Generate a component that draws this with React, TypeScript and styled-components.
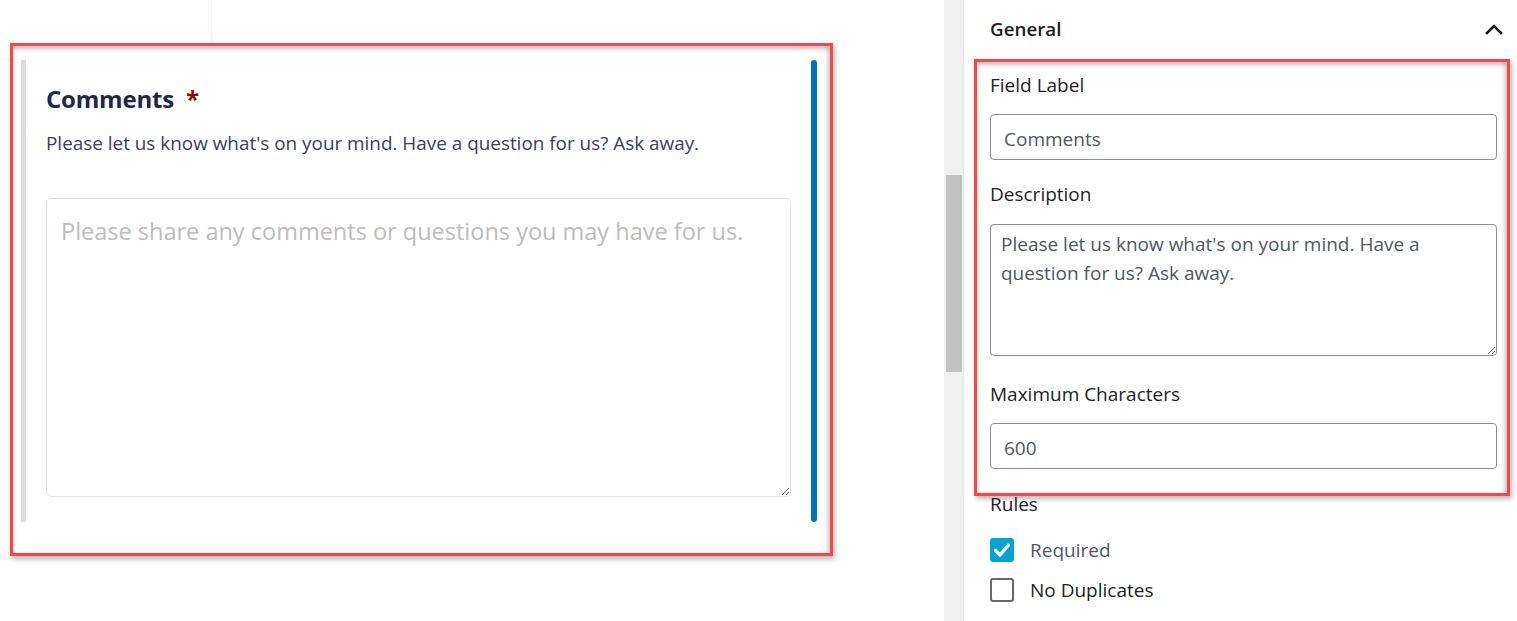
import React from "react";
import styled, { createGlobalStyle } from "styled-components";

const Global = createGlobalStyle`
  html, body { margin: 0; padding: 0; background: #fff; }
  body { font-family: "Open Sans", "Noto Sans", sans-serif; overflow: hidden; }
  * { box-sizing: border-box; }
`;

const Page = styled.div`
  display: flex;
  width: 1517px;
  height: 621px;
  overflow: hidden;
`;

const Canvas = styled.div`
  position: relative;
  width: 944px;
  flex: none;
  padding: 43px 0 0 10px;
`;

const Ghost = styled.div`
  position: absolute;
  left: 0;
  top: 0;
  width: 212px;
  height: 60px;
  border-right: 1px solid #f4f4f4;
  border-bottom: 1px solid #f6f6f6;
`;

const Highlight = styled.div`
  position: relative;
  border: 3px solid #f44848;
  box-shadow: 2px 3px 5px rgba(0, 0, 0, 0.28), inset 0 3px 5px rgba(0, 0, 0, 0.22),
    inset -3px 0 4px rgba(0, 0, 0, 0.12);
`;

const CardFrame = styled(Highlight)`
  width: 823px;
  height: 513px;
  padding: 14px 13px 31px 8px;
  background: #fff;
`;

const FieldBlock = styled.div`
  display: flex;
  height: 100%;
  border-left: 5px solid #dcdcdc;
`;

const FieldBody = styled.div`
  flex: 1;
  padding: 24px 20px 25px 20px;
  display: flex;
  flex-direction: column;
`;

const Title = styled.div`
  font-size: 24px;
  line-height: 29px;
  font-weight: 700;
  color: #23264a;
  letter-spacing: -0.2px;
`;

const Star = styled.span`
  color: #7a1010;
  margin-left: 12px;
  font-weight: 700;
`;

const Help = styled.div`
  margin-top: 18px;
  font-size: 18.9px;
  line-height: 24px;
  color: #3b3e5d;
  white-space: nowrap;
`;

const BigArea = styled.textarea`
  display: block;
  margin-top: 43px;
  flex: 1;
  width: 100%;
  resize: vertical;
  border: 1px solid #e2e2e2;
  border-radius: 5px;
  padding: 15px 14px;
  font-family: inherit;
  font-size: 23.5px;
  line-height: 34px;
  color: #333;
  outline: none;
  &::placeholder { color: #bcbcbc; }
`;

const SelectedBar = styled.div`
  width: 6px;
  flex: none;
  background: #0073b8;
  border-radius: 3px;
`;

const Track = styled.div`
  width: 20px;
  flex: none;
  background: #f0f0f0;
  border-right: 1px solid #e4e4e4;
  padding: 175px 1px 0 2px;
`;

const Thumb = styled.div`
  height: 197px;
  background: #c1c1c1;
`;

const Sidebar = styled.div`
  flex: 1;
  padding: 0 7px 0 10px;
`;

const SectionHead = styled.div`
  display: flex;
  align-items: center;
  justify-content: space-between;
  height: 59px;
  padding: 0 7px 2px 16px;
  font-size: 18.8px;
  font-weight: 600;
  color: #1e1e1e;
`;

const FieldsBox = styled(Highlight)`
  padding: 11px 10px 24px 13px;
  display: flex;
  flex-direction: column;
  background: #fff;
  z-index: 1;
`;

const Label = styled.label<{ $gap?: number }>`
  display: block;
  font-size: 19px;
  line-height: 24px;
  color: #1e1e1e;
  margin-top: ${(p) => p.$gap ?? 0}px;
`;

const TextInput = styled.input`
  display: block;
  width: 100%;
  height: 46px;
  margin-top: 17px;
  border: 1px solid #8c8f94;
  border-radius: 4px;
  padding: 3px 13px 0;
  font-family: inherit;
  font-size: 19px;
  color: #50575e;
  outline: none;
`;

const DescArea = styled.textarea`
  display: block;
  width: 100%;
  height: 132px;
  margin-top: 18px;
  border: 1px solid #8c8f94;
  border-radius: 4px;
  padding: 5px 10px;
  font-family: inherit;
  font-size: 19px;
  line-height: 29px;
  color: #50575e;
  resize: vertical;
  outline: none;
`;

const Rules = styled.div`
  padding: 0 0 0 16px;
  margin-top: -4px;
`;

const RulesTitle = styled.div`
  font-size: 19px;
  line-height: 24px;
  color: #1e1e1e;
`;

const CheckRow = styled.div<{ $gap: number }>`
  display: flex;
  align-items: center;
  gap: 16px;
  margin-top: ${(p) => p.$gap}px;
  font-size: 19px;
  line-height: 24px;
`;

const Box = styled.span<{ $on?: boolean }>`
  width: 24px;
  height: 24px;
  flex: none;
  border-radius: 3px;
  display: flex;
  align-items: center;
  justify-content: center;
  background: ${(p) => (p.$on ? "#03a3d6" : "#fff")};
  border: ${(p) => (p.$on ? "none" : "2.5px solid #646970")};
`;

const CheckText = styled.span<{ $muted?: boolean }>`
  color: ${(p) => (p.$muted ? "#50575e" : "#1e1e1e")};
`;

const Chevron = () => (
  <svg width="18" height="12" viewBox="0 0 18 12" fill="none">
    <path d="M2 10 L9 3 L16 10" stroke="#111" strokeWidth="2.6" strokeLinecap="square" />
  </svg>
);

const Tick = () => (
  <svg width="18" height="16" viewBox="0 0 18 16" fill="none">
    <path d="M2.5 8.5 L7 13 L15.5 3" stroke="#fff" strokeWidth="3.4" strokeLinecap="round" strokeLinejoin="round" />
  </svg>
);

export default function App() {
  return (
    <Page>
      <Global />
      <Canvas>
        <Ghost />
        <CardFrame>
          <FieldBlock>
            <FieldBody>
              <Title>
                Comments<Star>*</Star>
              </Title>
              <Help>Please let us know what's on your mind. Have a question for us? Ask away.</Help>
              <BigArea placeholder="Please share any comments or questions you may have for us." />
            </FieldBody>
            <SelectedBar />
          </FieldBlock>
        </CardFrame>
      </Canvas>
      <Track>
        <Thumb />
      </Track>
      <Sidebar>
        <SectionHead>
          <span>General</span>
          <Chevron />
        </SectionHead>
        <FieldsBox>
          <Label>Field Label</Label>
          <TextInput defaultValue="Comments" />
          <Label $gap={22}>Description</Label>
          <DescArea defaultValue="Please let us know what's on your mind. Have a question for us? Ask away." />
          <Label $gap={26}>Maximum Characters</Label>
          <TextInput defaultValue="600" />
        </FieldsBox>
        <Rules>
          <RulesTitle>Rules</RulesTitle>
          <CheckRow $gap={22}>
            <Box $on>
              <Tick />
            </Box>
            <CheckText $muted>Required</CheckText>
          </CheckRow>
          <CheckRow $gap={16}>
            <Box />
            <CheckText>No Duplicates</CheckText>
          </CheckRow>
        </Rules>
      </Sidebar>
    </Page>
  );
}
